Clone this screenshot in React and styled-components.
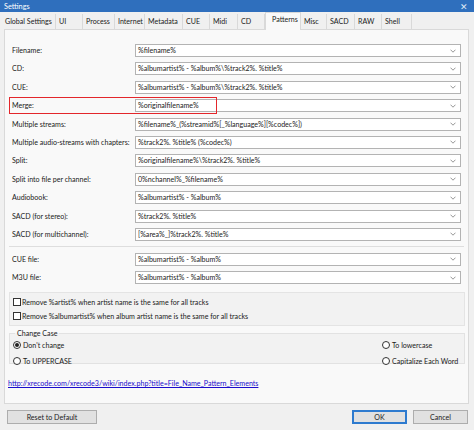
import React from "react";
import styled, { createGlobalStyle } from "styled-components";

const Global = createGlobalStyle`
  html, body { margin: 0; padding: 0; width: 474px; height: 430px; overflow: hidden; background: #f0f0f0; }
  body { font-family: Lato, "Open Sans", sans-serif; color: #1a1a1a; }
  * { box-sizing: border-box; }
`;

const Window = styled.div`
  width: 474px;
  height: 430px;
  display: flex;
  flex-direction: column;
  background: #f0f0f0;
  font-size: 7.1px;
`;

const TitleBar = styled.div`
  height: 12px;
  background: #2f6fbd;
  color: #fff;
  display: flex;
  align-items: center;
  justify-content: space-between;
  padding: 0 6px 0 4px;
  font-size: 7.3px;
`;

const Close = styled.span`
  font-size: 9px;
  line-height: 1;
  color: #dfe9f6;
`;

const TabBar = styled.div`
  height: 16px;
  margin-top: 1px;
  display: flex;
  align-items: flex-end;
  padding-left: 2px;
  position: relative;
  z-index: 1;
`;

const Tab = styled.div`
  width: ${p => p.$w}px;
  height: ${p => (p.$active ? 18 : 15)}px;
  margin-bottom: ${p => (p.$active ? -1 : 0)}px;
  display: flex;
  align-items: ${p => (p.$active ? "flex-start" : "center")};
  padding: ${p => (p.$active ? "2px 0 0 6px" : "0 0 0 3px")};
  background: ${p => (p.$active ? "#f9f9f9" : "#f0f0f0")};
  border-right: 1px solid #d9d9d9;
  border-top: ${p => (p.$active ? "1px solid #d9d9d9" : "none")};
  border-left: ${p => (p.$active ? "1px solid #d9d9d9" : "none")};
  white-space: nowrap;
`;

const Panel = styled.div`
  margin: 0 5px 0 4px;
  height: 375px;
  background: #f9f9f9;
  border: 1px solid #d9d9d9;
  padding: 14px 3px 0 3px;
  display: flex;
  flex-direction: column;
`;

const FormGrid = styled.div`
  display: grid;
  grid-template-columns: 123px 326px;
  row-gap: 5.4px;
  padding-left: 4px;
`;

const Label = styled.div`
  height: 13px;
  display: flex;
  align-items: center;
  position: relative;
  white-space: nowrap;
`;

const Highlight = styled.div`
  position: absolute;
  left: -3px;
  top: -2px;
  width: 208px;
  height: 17px;
  border: 1.5px solid #e3262b;
  pointer-events: none;
  z-index: 2;
`;

const Combo = styled.div`
  height: 13px;
  background: #fff;
  border: 1px solid #b3b3b3;
  display: flex;
  align-items: center;
  justify-content: space-between;
  padding: 0 4px 0 2px;
  white-space: nowrap;
  color: #222;
`;

const Divider = styled.div`
  grid-column: 1 / -1;
  height: 1px;
  background: #dedede;
  margin: 0 -3px;
`;

const Section = styled.div`
  margin: ${p => p.$m || "0"};
  background: #f2f2f2;
  border: 1px solid #e4e4e4;
  padding: ${p => p.$p || "0"};
  display: flex;
  flex-direction: column;
`;

const CheckRow = styled.label`
  height: 14px;
  display: flex;
  align-items: center;
  gap: 1px;
  white-space: nowrap;
`;

const Box = styled.span`
  width: 8px;
  height: 8px;
  border: 1px solid #333;
  background: #fff;
  flex: none;
`;

const Group = styled.fieldset`
  margin: 3px 0 0 1px;
  padding: 0 6px 0 3px;
  border: 1px solid #e2e2e2;
  background: #f2f2f2;
  height: 35px;
  display: grid;
  grid-template-columns: 1fr 76px;
  align-content: start;
  row-gap: 2px;
`;

const Legend = styled.legend`
  padding: 0 2px;
  margin-left: 2px;
`;

const RadioRow = styled.label`
  height: 14px;
  display: flex;
  align-items: center;
  gap: 2px;
  white-space: nowrap;
`;

const Radio = styled.span`
  width: 8px;
  height: 8px;
  border-radius: 50%;
  border: 1px solid #333;
  background: #fff;
  flex: none;
  display: flex;
  align-items: center;
  justify-content: center;
  &::after {
    content: "";
    width: 4px;
    height: 4px;
    border-radius: 50%;
    background: ${p => (p.$on ? "#222" : "transparent")};
  }
`;

const Link = styled.a`
  margin: 15px 0 0 0;
  color: #1a0dcc;
  text-decoration: underline;
  white-space: nowrap;
`;

const Footer = styled.div`
  flex: 1;
  display: flex;
  align-items: center;
  padding: 0 6px 0 7px;
  gap: 6px;
`;

const Button = styled.button`
  width: ${p => p.$w}px;
  height: 14px;
  font-family: inherit;
  font-size: 7.1px;
  color: #1a1a1a;
  background: #e1e1e1;
  border: 1px solid ${p => (p.$primary ? "#2e7bcf" : "#adadad")};
  box-shadow: ${p => (p.$primary ? "inset 0 0 0 1px #2e7bcf" : "none")};
  padding: 0;
  margin-left: ${p => (p.$push ? "auto" : "0")};
`;

const Chevron = () => (
  <svg width="6" height="4" viewBox="0 0 6 4">
    <polyline points="0.5,0.7 3,3.2 5.5,0.7" fill="none" stroke="#8a8a8a" strokeWidth="0.9" />
  </svg>
);

const tabs = [
  ["Global Settings", 54],
  ["UI", 27],
  ["Process", 32],
  ["Internet", 30],
  ["Metadata", 38],
  ["CUE", 27],
  ["Midi", 28],
  ["CD", 27],
  ["Patterns", 36, true],
  ["Misc", 26],
  ["SACD", 28],
  ["RAW", 27],
  ["Shell", 30],
];

const rows = [
  ["Filename:", "%filename%"],
  ["CD:", "%albumartist% - %album%\\%track2%. %title%"],
  ["CUE:", "%albumartist% - %album%\\%track2%. %title%"],
  ["Merge:", "%originalfilename%", true],
  ["Multiple streams:", "%filename%_(%streamid%[_%language%][%codec%])"],
  ["Multiple audio-streams with chapters:", "%track2%. %title% (%codec%)"],
  ["Split:", "%originalfilename%\\%track2%. %title%"],
  ["Split into file per channel:", "0%nchannel%_%filename%"],
  ["Audiobook:", "%albumartist% - %album%"],
  ["SACD (for stereo):", "%track2%. %title%"],
  ["SACD (for multichannel):", "[%area%_]%track2%. %title%"],
];

const rows2 = [
  ["CUE file:", "%albumartist% - %album%"],
  ["M3U file:", "%albumartist% - %album%"],
];

const Field = ({ label, value, mark }) => (
  <>
    <Label>
      {label}
      {mark && <Highlight />}
    </Label>
    <Combo>
      <span>{value}</span>
      <Chevron />
    </Combo>
  </>
);

export default function App() {
  return (
    <Window>
      <Global />
      <TitleBar>
        <span>Settings</span>
        <Close>✕</Close>
      </TitleBar>
      <TabBar>
        {tabs.map(([t, w, a]) => (
          <Tab key={t} $w={w} $active={a}>{t}</Tab>
        ))}
      </TabBar>
      <Panel>
        <FormGrid>
          {rows.map(([l, v, m]) => (
            <Field key={l} label={l} value={v} mark={m} />
          ))}
          <Divider />
          {rows2.map(([l, v]) => (
            <Field key={l} label={l} value={v} />
          ))}
        </FormGrid>
        <Section $m="8px 0 0 1px" $p="2px 0 2px 3px">
          <CheckRow><Box />Remove %artist% when artist name is the same for all tracks</CheckRow>
          <CheckRow><Box />Remove %albumartist% when album artist name is the same for all tracks</CheckRow>
        </Section>
        <Group>
          <Legend>Change Case</Legend>
          <RadioRow><Radio $on />Don't change</RadioRow>
          <RadioRow><Radio />To lowercase</RadioRow>
          <RadioRow><Radio />To UPPERCASE</RadioRow>
          <RadioRow><Radio />Capitalize Each Word</RadioRow>
        </Group>
        <Link href="#">http://xrecode.com/xrecode3/wiki/index.php?title=File_Name_Pattern_Elements</Link>
      </Panel>
      <Footer>
        <Button $w={90}>Reset to Default</Button>
        <Button $w={55} $primary $push>OK</Button>
        <Button $w={55}>Cancel</Button>
      </Footer>
    </Window>
  );
}
